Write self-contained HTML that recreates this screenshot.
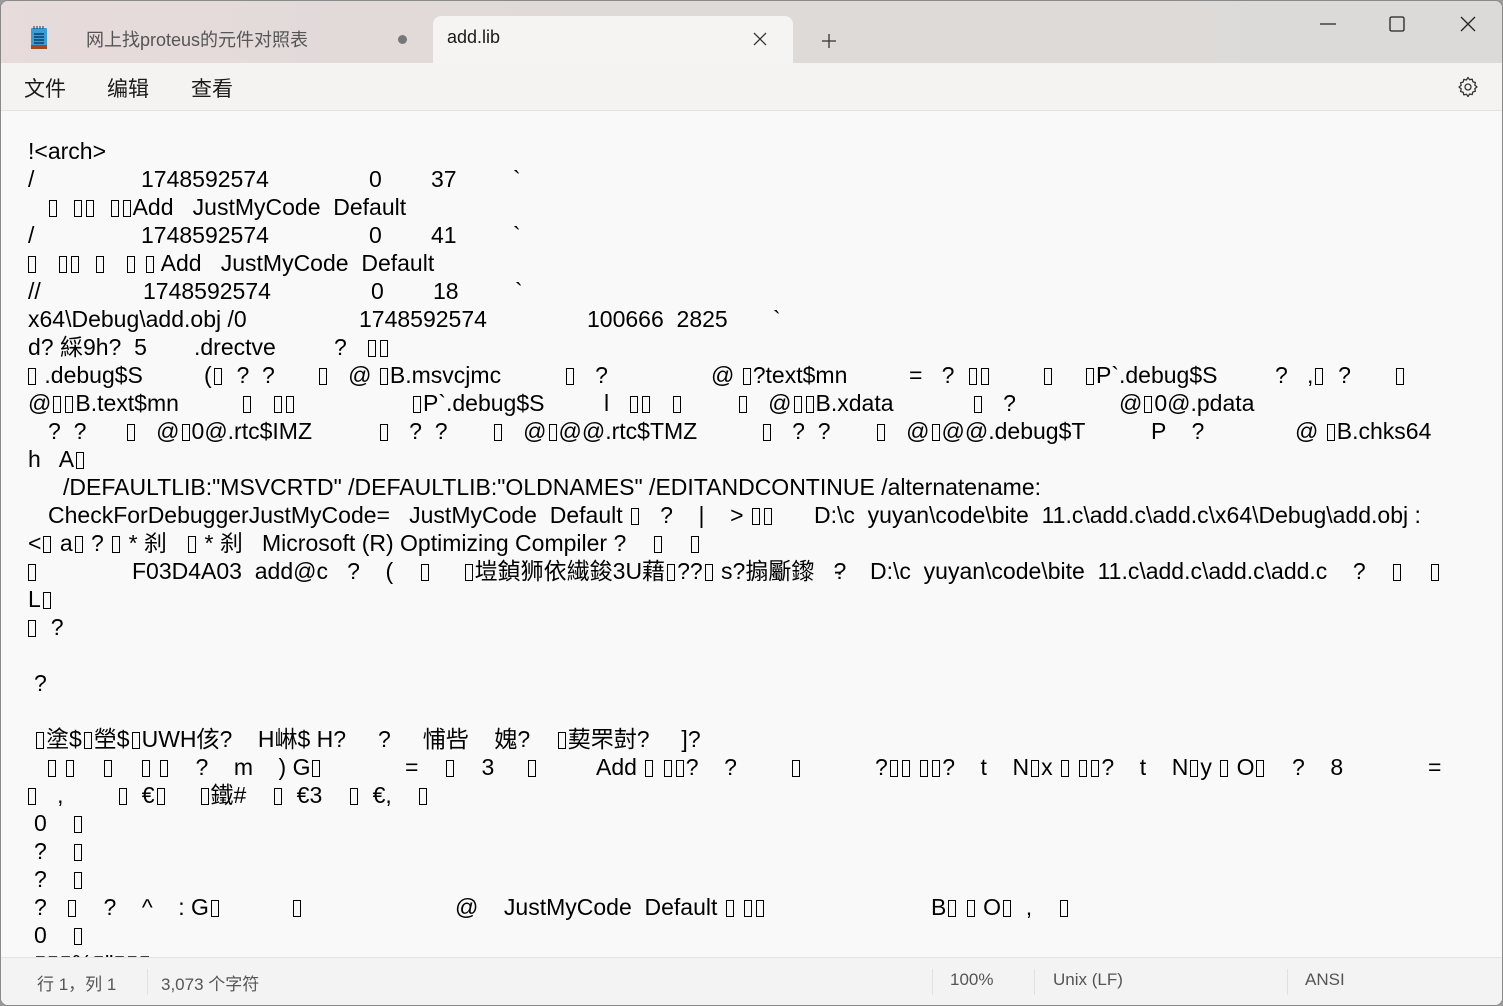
<!DOCTYPE html>
<html><head><meta charset="utf-8"><style>
*{margin:0;padding:0;box-sizing:border-box}
body{width:1503px;height:1006px;overflow:hidden;background:#9a9a9a;font-family:"Liberation Sans","Noto Sans CJK SC",sans-serif;position:relative}
.win{position:absolute;left:0;top:0;width:1503px;height:1006px;background:#f9f9f9;border-radius:8px;overflow:hidden;border:1px solid #8a8a8a}
.title{position:absolute;left:0;top:0;width:1503px;height:62px;background:linear-gradient(90deg,#e7dbdb,#dedad8 40%,#dcdad8)}
.tab1{position:absolute;left:85px;top:25px;font-size:18px;color:#555}
.tab2{position:absolute;left:432px;top:15px;width:360px;height:50px;background:#f6f4f3;border-radius:8px 8px 0 0}
.tab2 span{position:absolute;left:14px;top:11px;font-size:18px;color:#1a1a1a}
.menu{position:absolute;left:0;top:62px;width:1503px;height:48px;background:#f5f3f2;border-bottom:1px solid #e5e3e2}
.menu span{position:absolute;top:10px;font-size:21px;color:#1a1a1a}
.status{position:absolute;left:0;top:956px;width:1503px;height:50px;background:#f3f3f3;border-top:1px solid #e4e4e4;font-size:17px;color:#555}
.status span{position:absolute;top:12px}
.sep{position:absolute;top:11px;width:1px;height:26px;background:#e0e0e0}
.l{position:absolute;left:0;height:28px;width:1503px;font-size:23px;color:#000;white-space:pre;line-height:28px}
.l s{position:absolute;text-decoration:none;top:-1px}
i{display:inline-block;width:8px;height:17px;border:1.7px solid #000;margin:0 2px;vertical-align:-2px}
</style></head><body><div class="win">
<div class="title">
<svg style="position:absolute;left:28px;top:24px" width="20" height="26" viewBox="0 0 20 26"><rect x="2" y="3" width="16" height="19" rx="1" fill="#3b9bd6"/><rect x="2" y="20" width="16" height="4" fill="#a24a1c"/><g stroke="#0d3f66" stroke-width="1.4"><line x1="5" y1="9" x2="15" y2="9"/><line x1="5" y1="12" x2="15" y2="12"/><line x1="5" y1="15" x2="15" y2="15"/><line x1="5" y1="18" x2="15" y2="18"/></g><g stroke="#333" stroke-width="1"><line x1="5" y1="1" x2="5" y2="4"/><line x1="8" y1="1" x2="8" y2="4"/><line x1="11" y1="1" x2="11" y2="4"/><line x1="14" y1="1" x2="14" y2="4"/></g></svg>
<div class="tab1">网上找proteus的元件对照表</div>
<div style="position:absolute;left:397px;top:34px;width:9px;height:9px;border-radius:50%;background:#777"></div>
<div class="tab2"><span>add.lib</span>
<svg style="position:absolute;left:320px;top:16px" width="14" height="14"><path d="M1 1L13 13M13 1L1 13" stroke="#333" stroke-width="1.3"/></svg></div>
<svg style="position:absolute;left:820px;top:32px" width="16" height="16"><path d="M8 1V15M1 8H15" stroke="#333" stroke-width="1.3"/></svg>
<svg style="position:absolute;left:1319px;top:22px" width="16" height="2"><path d="M0 1H16" stroke="#222" stroke-width="1.2"/></svg>
<svg style="position:absolute;left:1388px;top:15px" width="16" height="16"><rect x="1" y="1" width="14" height="14" rx="1.5" fill="none" stroke="#222" stroke-width="1.3"/></svg>
<svg style="position:absolute;left:1459px;top:15px" width="16" height="16"><path d="M1 1L15 15M15 1L1 15" stroke="#222" stroke-width="1.3"/></svg>
</div>
<div class="menu"><span style="left:23px">文件</span><span style="left:106px">编辑</span><span style="left:190px">查看</span>
<svg style="position:absolute;left:1455px;top:12px" width="24" height="24" viewBox="0 0 24 24"><path d="M12 2.5l1.6 2.2 2.6-.6.6 2.6 2.6.8-.6 2.6L21 12l-2.2 1.6.6 2.6-2.6.8-.6 2.6-2.6-.6L12 21.5l-1.6-2.2-2.6.6-.6-2.6-2.6-.8.6-2.6L3 12l2.2-1.6-.6-2.6 2.6-.8.6-2.6 2.6.6z" fill="none" stroke="#333" stroke-width="1.3" stroke-linejoin="round"/><circle cx="12" cy="12" r="3" fill="none" stroke="#333" stroke-width="1.3"/></svg></div>

<div class="l" style="top:137px"><s style="left:27px">!&lt;arch&gt;</s></div>
<div class="l" style="top:165px"><s style="left:27px">/</s><s style="left:140px">1748592574</s><s style="left:368px">0</s><s style="left:430px">37</s><s style="left:512px">`</s></div>
<div class="l" style="top:193px"><s style="left:46px"><i></i>  <i></i><i></i>  <i></i><i></i>Add   JustMyCode  Default</s></div>
<div class="l" style="top:221px"><s style="left:27px">/</s><s style="left:140px">1748592574</s><s style="left:368px">0</s><s style="left:430px">41</s><s style="left:512px">`</s></div>
<div class="l" style="top:249px"><s style="left:25px"><i></i>   <i></i><i></i>  <i></i>   <i></i> <i></i> Add   JustMyCode  Default</s></div>
<div class="l" style="top:277px"><s style="left:27px">//</s><s style="left:142px">1748592574</s><s style="left:370px">0</s><s style="left:432px">18</s><s style="left:514px">`</s></div>
<div class="l" style="top:305px"><s style="left:27px">x64\Debug\add.obj /0</s><s style="left:358px">1748592574</s><s style="left:586px">100666  2825</s><s style="left:772px">`</s></div>
<div class="l" style="top:333px"><s style="left:27px">d? 綵9h?  5</s><s style="left:193px">.drectve</s><s style="left:333px">?   <i></i><i></i></s></div>
<div class="l" style="top:361px"><s style="left:25px"><i></i> .debug$S</s><s style="left:203px">(<i></i>  ?  ?</s><s style="left:316px"><i></i>   @ <i></i>B.msvcjmc</s><s style="left:563px"><i></i>   ?</s><s style="left:710px">@ <i></i>?text$mn</s><s style="left:908px">=   ?  <i></i><i></i></s><s style="left:1041px"><i></i></s><s style="left:1083px"><i></i>P`.debug$S</s><s style="left:1274px">?   ,<i></i>  ?</s><s style="left:1393px"><i></i></s></div>
<div class="l" style="top:389px"><s style="left:27px">@<i></i><i></i>B.text$mn</s><s style="left:240px"><i></i>   <i></i><i></i></s><s style="left:410px"><i></i>P`.debug$S</s><s style="left:603px">l   <i></i><i></i>   <i></i></s><s style="left:736px"><i></i>   @<i></i><i></i>B.xdata</s><s style="left:971px"><i></i>   ?</s><s style="left:1118px">@<i></i>0@.pdata</s></div>
<div class="l" style="top:417px"><s style="left:47px">?  ?</s><s style="left:124px"><i></i>   @<i></i>0@.rtc$IMZ</s><s style="left:377px"><i></i>   ?  ?</s><s style="left:491px"><i></i>   @<i></i>@@.rtc$TMZ</s><s style="left:760px"><i></i>   ?  ?</s><s style="left:874px"><i></i>   @<i></i>@@.debug$T</s><s style="left:1150px">P    ?</s><s style="left:1294px">@ <i></i>B.chks64</s></div>
<div class="l" style="top:445px"><s style="left:27px">h   A<i></i></s></div>
<div class="l" style="top:473px"><s style="left:62px">/DEFAULTLIB:"MSVCRTD" /DEFAULTLIB:"OLDNAMES" /EDITANDCONTINUE /alternatename:</s></div>
<div class="l" style="top:501px"><s style="left:47px">CheckForDebuggerJustMyCode=   JustMyCode  Default <i></i>   ?    |    &gt; <i></i><i></i></s><s style="left:813px">D:\c  yuyan\code\bite  11.c\add.c\add.c\x64\Debug\add.obj :</s></div>
<div class="l" style="top:529px"><s style="left:27px">&lt;<i></i> a<i></i> ? <i></i> * 刹   <i></i> * 刹   Microsoft (R) Optimizing Compiler ?    <i></i>    <i></i></s></div>
<div class="l" style="top:557px"><s style="left:25px"><i></i></s><s style="left:131px">F03D4A03  add@c   ?    (    <i></i>     <i></i>塏鍞狮依繊鋑3U藉<i></i>??<i></i> s?搧斸鑗   ?</s><s style="left:833px">-</s><s style="left:869px">D:\c  yuyan\code\bite  11.c\add.c\add.c\add.c    ?    <i></i>    <i></i></s></div>
<div class="l" style="top:585px"><s style="left:27px">L<i></i></s></div>
<div class="l" style="top:613px"><s style="left:25px"><i></i>  ?</s></div>
<div class="l" style="top:669px"><s style="left:33px">?</s></div>
<div class="l" style="top:725px"><s style="left:33px"><i></i>塗$<i></i>塋$<i></i>UWH侅?    H崊$ H?     ?     悑呰    媿?    <i></i>葜罘尌?     ]?</s></div>
<div class="l" style="top:753px"><s style="left:45px"><i></i> <i></i>    <i></i>    <i></i> <i></i>    ?    m    ) G<i></i></s><s style="left:404px">=    <i></i>    3     <i></i></s><s style="left:595px">Add <i></i> <i></i><i></i>?    ?</s><s style="left:789px"><i></i></s><s style="left:874px">?<i></i><i></i> <i></i><i></i>?    t    N<i></i>x <i></i> <i></i><i></i>?    t    N<i></i>y <i></i> O<i></i>    ?    8</s><s style="left:1427px">=</s></div>
<div class="l" style="top:781px"><s style="left:25px"><i></i>   ,</s><s style="left:116px"><i></i>  €<i></i>     <i></i>鐵#    <i></i>  €3    <i></i>  €,    <i></i></s></div>
<div class="l" style="top:809px"><s style="left:33px">0    <i></i></s></div>
<div class="l" style="top:837px"><s style="left:33px">?    <i></i></s></div>
<div class="l" style="top:865px"><s style="left:33px">?    <i></i></s></div>
<div class="l" style="top:893px"><s style="left:33px">?   <i></i>    ?    ^    : G<i></i></s><s style="left:290px"><i></i></s><s style="left:454px">@    JustMyCode  Default <i></i> <i></i><i></i></s><s style="left:930px">B<i></i> <i></i> O<i></i>  ,    <i></i></s></div>
<div class="l" style="top:921px"><s style="left:33px">0    <i></i></s></div>
<div class="l" style="top:949px"><s style="left:33px">▯▯▯%▯"▯▯▯</s></div>

<div class="status">
<span style="left:36px">行 1，列 1</span><div class="sep" style="left:146px"></div>
<span style="left:160px">3,073 个字符</span><div class="sep" style="left:931px"></div>
<span style="left:949px">100%</span><div class="sep" style="left:1033px"></div>
<span style="left:1052px">Unix (LF)</span><div class="sep" style="left:1286px"></div>
<span style="left:1304px">ANSI</span>
</div>
</div></body></html>
